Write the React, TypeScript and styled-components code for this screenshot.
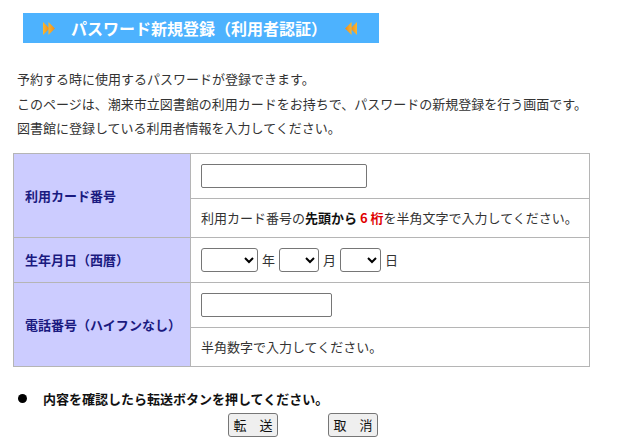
import * as React from 'react'
import styled, { createGlobalStyle } from 'styled-components'

const GlobalStyle = createGlobalStyle`
    body {
        margin: 0;
        background: #fff;
        color: #333;
        font-family: 'Noto Sans CJK JP', 'Noto Sans', sans-serif;
        font-size: 13px;
    }
`

const Arrows = ({ dir }: { dir: 'right' | 'left' }) => (
    <ArrowIcon width='13' height='13' viewBox='0 0 12 12' style={{ transform: dir === 'left' ? 'scaleX(-1)' : undefined }}>
        <defs>
            <linearGradient id={`ag-${dir}`} x1='0' y1='0' x2='1' y2='0'>
                <stop offset='0' stopColor='#f7b733' />
                <stop offset='1' stopColor='#f08a1c' />
            </linearGradient>
        </defs>
        <polygon points='0,0 6,6 0,12' fill={`url(#ag-${dir})`} />
        <polygon points='5,0 11,6 5,12' fill={`url(#ag-${dir})`} />
    </ArrowIcon>
)

export default function App() {
    return (
        <Page>
            <GlobalStyle />
            <TitleBar>
                <Arrows dir='right' />
                <Title>パスワード新規登録（利用者認証）</Title>
                <Arrows dir='left' />
            </TitleBar>

            <Intro>
                <p>予約する時に使用するパスワードが登録できます。</p>
                <p>このページは、潮来市立図書館の利用カードをお持ちで、パスワードの新規登録を行う画面です。</p>
                <p>図書館に登録している利用者情報を入力してください。</p>
            </Intro>

            <FormGrid>
                <Label span={2}>利用カード番号</Label>
                <Field><TextInput type='text' width={166} /></Field>
                <Field>
                    利用カード番号の<strong>先頭から</strong><Red>&nbsp;6&nbsp;桁</Red>を半角文字で入力してください。
                </Field>

                <Label span={1}>生年月日（西暦）</Label>
                <Field>
                    <DateRow>
                        <Select width={57}><option></option></Select>
                        <span>年</span>
                        <Select width={40}><option></option></Select>
                        <span>月</span>
                        <Select width={41}><option></option></Select>
                        <span>日</span>
                    </DateRow>
                </Field>

                <Label span={2}>電話番号（ハイフンなし）</Label>
                <Field><TextInput type='text' width={131} /></Field>
                <Field>半角数字で入力してください。</Field>
            </FormGrid>

            <Notice>
                <Dot />
                内容を確認したら転送ボタンを押してください。
            </Notice>

            <Buttons>
                <Button>転　送</Button>
                <Button>取　消</Button>
            </Buttons>
        </Page>
    )
}

const Page = styled.div`
    padding-top: 13px;
    padding-bottom: 12px;
`

const TitleBar = styled.div`
    display: flex;
    align-items: center;
    width: 356px;
    height: 30px;
    margin-left: 23px;
    padding-left: 20px;
    box-sizing: border-box;
    background-color: #4db2fe;
`

const ArrowIcon = styled.svg`
    flex: none;
    display: block;
`

const Title = styled.h1`
    margin: 0 17px 0 15px;
    color: #fff;
    font-size: 16px;
    font-weight: bold;
    line-height: 30px;
    white-space: nowrap;
`

const Intro = styled.div`
    margin-top: 24px;
    padding-left: 17px;
    p {
        margin: 0;
        line-height: 24.5px;
        white-space: nowrap;
    }
`

const FormGrid = styled.div`
    display: grid;
    grid-template-columns: 176px 398px;
    grid-template-rows: 44px 38px 44px 44px 38px;
    gap: 1px;
    width: max-content;
    margin: 12px 0 0 13px;
    padding: 1px;
    background-color: #b5b5b5;
`

const Label = styled.div<{ span: number }>`
    grid-row: span ${props => props.span};
    display: flex;
    align-items: center;
    padding-left: 11px;
    background-color: #ccccff;
    color: #1a1a80;
    font-weight: bold;
`

const Field = styled.div`
    display: flex;
    align-items: center;
    padding-left: 10px;
    background-color: #fff;
    white-space: nowrap;
    strong {
        color: #111;
    }
`

const Red = styled.strong`
    color: #e00000 !important;
`

const TextInput = styled.input<{ width: number }>`
    width: ${props => props.width}px;
    height: 24px;
    box-sizing: border-box;
    border: 1px solid #767676;
    border-radius: 2px;
    padding: 1px 2px;
    font: inherit;
`

const DateRow = styled.div`
    display: flex;
    align-items: center;
    gap: 4px;
`

const Select = styled.select<{ width: number }>`
    width: ${props => props.width}px;
    height: 24px;
    box-sizing: border-box;
    border: 1px solid #767676;
    border-radius: 3px;
    background-color: #fff;
    font: inherit;
`

const Notice = styled.div`
    display: flex;
    align-items: center;
    margin-top: 22px;
    padding-left: 18px;
    color: #111;
    font-weight: bold;
    line-height: 20px;
`

const Dot = styled.span`
    width: 9px;
    height: 9px;
    margin-right: 16px;
    border-radius: 50%;
    background-color: #000;
`

const Buttons = styled.div`
    display: flex;
    justify-content: center;
    gap: 50px;
    width: 580px;
    margin: 4px 0 0 13px;
`

const Button = styled.button`
    width: 50px;
    height: 24px;
    padding: 0;
    border: 1px solid #767676;
    border-radius: 3px;
    background-color: #efefef;
    color: #111;
    font: inherit;
    font-size: 13px;
`
